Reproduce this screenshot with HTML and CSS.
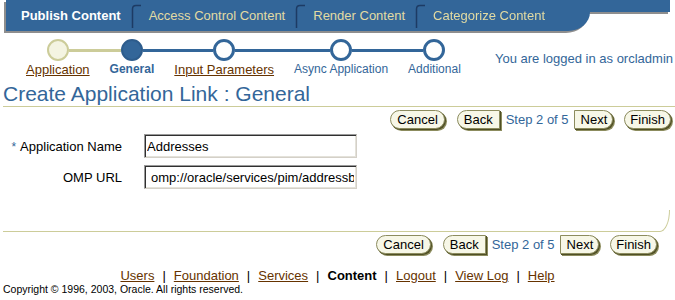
FILE: index.html
```html
<!DOCTYPE html>
<html>
<head>
<meta charset="utf-8">
<link rel="stylesheet" href="styles.css">
</head>
<body>
<div class="tabbar">
  <div class="tabs">
    <span class="tab active">Publish Content</span>
    <svg class="sep" viewBox="0 0 10 24"><path d="M1.5 24 V5 Q1.5 1.5 5 1.5 H10" fill="none" stroke="#1d3b64" stroke-width="1.5"/></svg>
    <span class="tab">Access Control Content</span>
    <svg class="sep" viewBox="0 0 10 24"><path d="M1.5 24 V5 Q1.5 1.5 5 1.5 H10" fill="none" stroke="#1d3b64" stroke-width="1.5"/></svg>
    <span class="tab">Render Content</span>
    <svg class="sep" viewBox="0 0 10 24"><path d="M1.5 24 V5 Q1.5 1.5 5 1.5 H10" fill="none" stroke="#1d3b64" stroke-width="1.5"/></svg>
    <span class="tab">Categorize Content</span>
  </div>
  <div class="tabfill"></div>
</div>

<div class="header">
  <div class="train">
    <div class="step">
      <div class="stepbar"><span class="half none"></span><span class="circle done"></span><span class="half khaki"></span></div>
      <div class="label"><a href="#">Application</a></div>
    </div>
    <div class="step">
      <div class="stepbar"><span class="half khaki"></span><span class="circle cur"></span><span class="half blue"></span></div>
      <div class="label cur">General</div>
    </div>
    <div class="step">
      <div class="stepbar"><span class="half blue"></span><span class="circle todo"></span><span class="half blue"></span></div>
      <div class="label"><a href="#">Input Parameters</a></div>
    </div>
    <div class="step">
      <div class="stepbar"><span class="half blue"></span><span class="circle todo"></span><span class="half blue"></span></div>
      <div class="label plain">Async Application</div>
    </div>
    <div class="step">
      <div class="stepbar"><span class="half blue"></span><span class="circle todo"></span><span class="half none"></span></div>
      <div class="label plain">Additional</div>
    </div>
  </div>
  <div class="login">You are logged in as orcladmin</div>
</div>

<h1 class="title">Create Application Link : General</h1>

<div class="btnrow top">
  <span class="btn cancel">Cancel</span>
  <span class="btn back">Back</span>
  <span class="stepno">Step 2 of 5</span>
  <span class="btn next">Next</span>
  <span class="btn finish">Finish</span>
</div>

<div class="form">
  <div class="flabel"><span class="req">*</span>Application Name</div>
  <input class="field" type="text" value="Addresses">
  <div class="flabel">OMP URL</div>
  <input class="field url" type="text" value="omp://oracle/services/pim/addressbook">
</div>

<div class="endbox"></div>

<div class="btnrow bottom">
  <span class="btn cancel">Cancel</span>
  <span class="btn back">Back</span>
  <span class="stepno">Step 2 of 5</span>
  <span class="btn next">Next</span>
  <span class="btn finish">Finish</span>
</div>

<div class="links">
  <a href="#">Users</a><span class="bar">|</span><a href="#">Foundation</a><span class="bar">|</span><a href="#">Services</a><span class="bar">|</span><b>Content</b><span class="bar">|</span><a href="#">Logout</a><span class="bar">|</span><a href="#">View Log</a><span class="bar">|</span><a href="#">Help</a>
</div>
<div class="copyright">Copyright © 1996, 2003, Oracle. All rights reserved.</div>
</body>
</html>
```

FILE: styles.css
```css
html, body {
  margin: 0;
  padding: 0;
  background: #ffffff;
}
body {
  width: 675px;
  height: 300px;
  overflow: hidden;
  font-family: "Liberation Sans", Arial, sans-serif;
  font-size: 13px;
  color: #000000;
}

/* tab bar */
.tabbar {
  display: flex;
  align-items: flex-start;
  margin-left: 6px;
  width: 664px;
  filter: drop-shadow(-2px 2px 0 #8e8e8e);
}
.tabs {
  box-sizing: border-box;
  width: 584px;
  height: 31px;
  background: #336699;
  border-bottom-right-radius: 22px 19px;
  display: flex;
  align-items: center;
  padding-left: 15px;
}
.tabfill {
  flex: 1;
  height: 12px;
  background: #336699;
}
.tab {
  color: #e2dba3;
  font-size: 13px;
  line-height: 16px;
  white-space: nowrap;
}
.tab.active {
  color: #ffffff;
  font-weight: bold;
}
.sep {
  flex: none;
  width: 10px;
  height: 24px;
  margin: 0 8px 0 10px;
}

/* header: train + login */
.header {
  display: flex;
  justify-content: space-between;
  align-items: flex-start;
}
.train {
  display: flex;
  margin: 8px 0 0 16px;
}
.step {
  display: flex;
  flex-direction: column;
  align-items: center;
}
.stepbar {
  display: flex;
  align-items: center;
  width: 100%;
  height: 22px;
}
.half {
  flex: 1;
  height: 3px;
}
.half.khaki { background: #cccc99; }
.half.blue { background: #336699; }
.half.none { background: transparent; }
.circle {
  flex: none;
  box-sizing: border-box;
  width: 22px;
  height: 22px;
  border-radius: 50%;
}
.circle.done {
  background: #f4f4e2;
  border: 2px solid #cccc99;
}
.circle.cur {
  background: #336699;
  border: 2px solid #2d5c8c;
}
.circle.todo {
  background: #ffffff;
  border: 3px solid #336699;
}
.label {
  margin-top: 1px;
  padding: 0 10px;
  line-height: 15px;
  font-size: 13px;
  white-space: nowrap;
  color: #336699;
}
.label a {
  color: #663300;
  text-decoration: underline;
}
.label.plain {
  font-size: 12px;
}
.label.cur {
  font-weight: bold;
  font-size: 12px;
}
.login {
  margin: 20px 2px 0 0;
  line-height: 15px;
  color: #336699;
  white-space: nowrap;
}

/* title */
.title {
  margin: 4px 0 0 3px;
  padding: 0;
  font-size: 21px;
  font-weight: normal;
  line-height: 25px;
  color: #336699;
  border-bottom: 1px solid #cccc99;
}

/* buttons */
.btnrow {
  display: flex;
  justify-content: flex-end;
  align-items: center;
}
.btnrow.top {
  margin-top: 3px;
  padding-right: 4px;
}
.btnrow.bottom {
  margin-top: 3px;
  padding-right: 18px;
}
.btn {
  box-sizing: border-box;
  height: 19px;
  line-height: 17px;
  padding: 0 6px;
  background: #f7f7e7;
  border: 1px solid #8c8c5e;
  border-radius: 10px;
  box-shadow: 1px 1px 0 #4f4f25, 2px 2px 0 #8c8c5e;
  color: #000000;
  white-space: nowrap;
}
.btn.cancel {
  margin-right: 12px;
  padding: 0 6px;
}
.btn.back {
  border-radius: 10px 0 0 10px;
  margin-right: 6px;
}
.btn.next {
  border-radius: 0 10px 10px 0;
  margin-right: 11px;
  padding: 0 5px 0 6px;
}
.btn.finish { padding: 0 5px; }
.stepno {
  color: #336699;
  margin-right: 5px;
  white-space: nowrap;
}

/* form */
.form {
  display: grid;
  grid-template-columns: 122px 213px;
  column-gap: 22px;
  row-gap: 7px;
  align-items: center;
  margin-top: 5px;
}
.flabel {
  text-align: right;
  white-space: nowrap;
}
.req {
  color: #336699;
  font-size: 12px;
  margin-right: 4px;
}
.field {
  box-sizing: border-box;
  width: 213px;
  height: 24px;
  margin: 0;
  padding: 0 2px 0 2px;
  font-family: "Liberation Sans", Arial, sans-serif;
  font-size: 13px;
  color: #000000;
  background: #ffffff;
  border: 1px solid;
  border-color: #9a9a9a #d4d0c8 #d4d0c8 #9a9a9a;
  box-shadow: inset 1px 1px 0 #303030, inset -1px -1px 0 #e4e2da;
  outline: none;
}
.field.url {
  padding-left: 6px;
}

/* bottom frame */
.endbox {
  box-sizing: border-box;
  height: 22px;
  margin: 21px 5px 0 3px;
  border-bottom: 1px solid #cccc99;
  border-right: 1px solid #cccc99;
  border-bottom-right-radius: 10px 22px;
}

/* footer */
.links {
  margin-top: 14px;
  text-align: center;
  line-height: 15px;
  white-space: nowrap;
}
.links a {
  color: #663300;
  text-decoration: underline;
}
.links b {
  color: #000000;
}
.links .bar {
  margin: 0 8px;
  color: #000000;
}
.copyright {
  margin: 0 0 0 3px;
  font-size: 10.5px;
  line-height: 12px;
  white-space: nowrap;
}
```
